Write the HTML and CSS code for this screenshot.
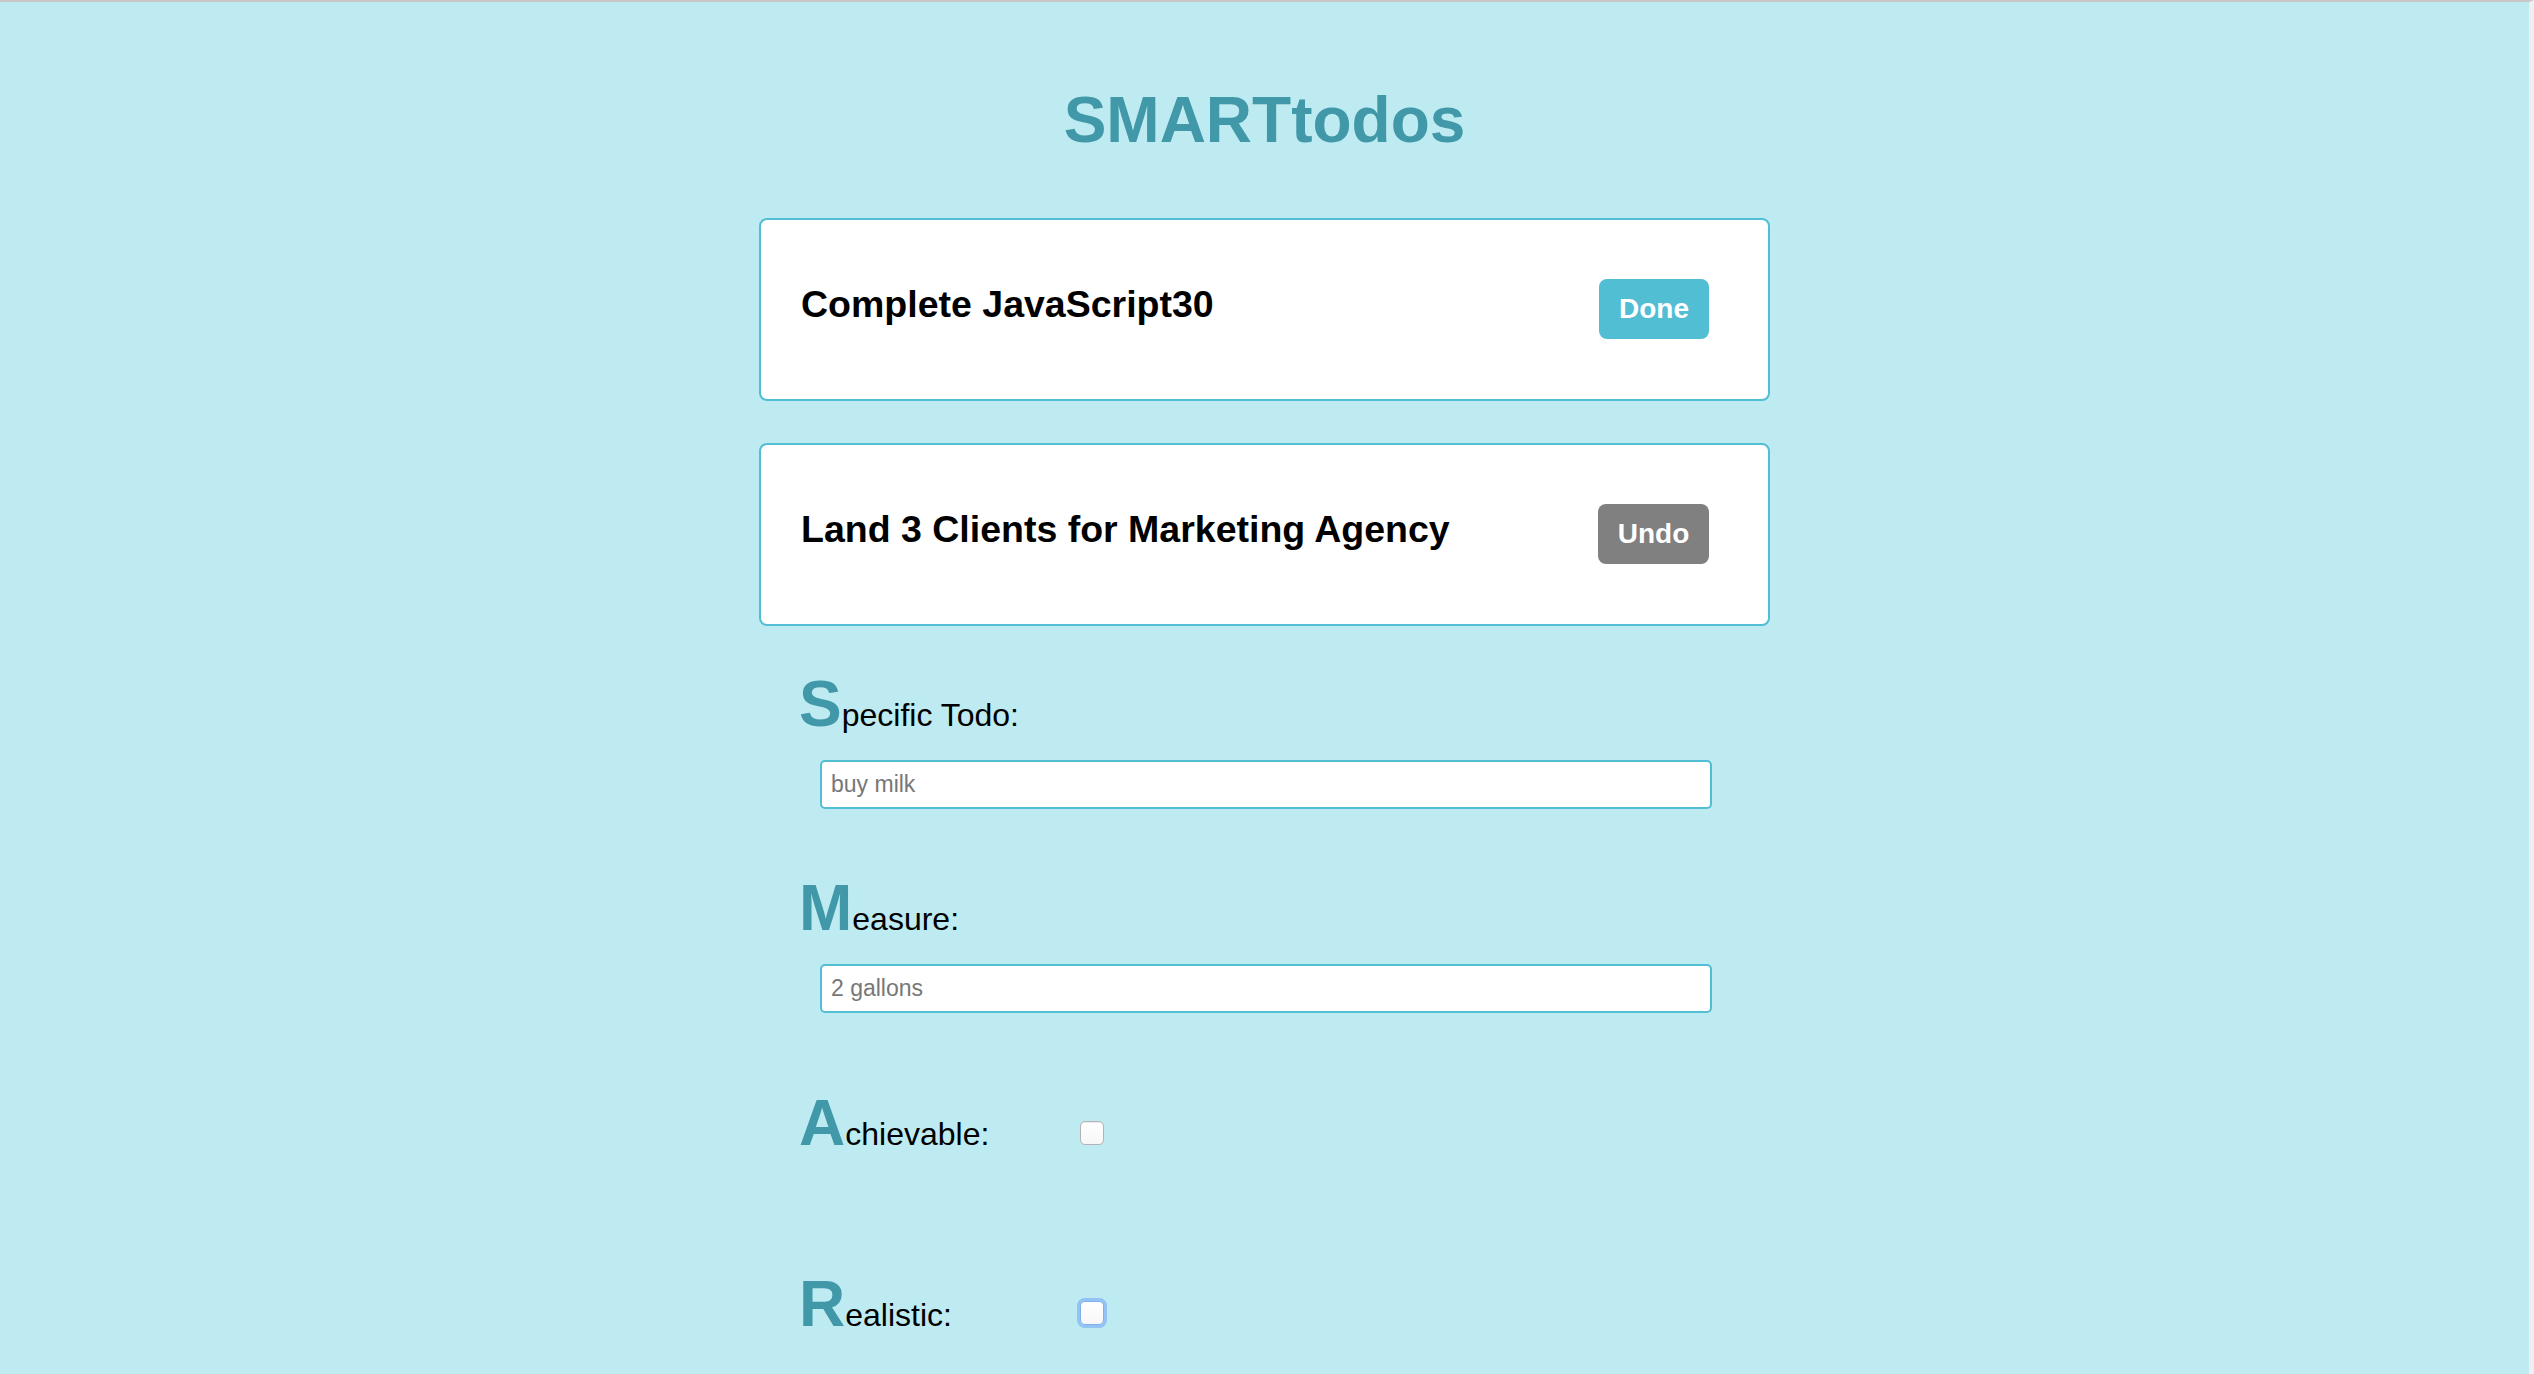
FILE: index.html
```html
<!DOCTYPE html>
<html lang="en">
<head>
<meta charset="utf-8">
<title>SMARTtodos</title>
<link rel="stylesheet" href="styles.css">
</head>
<body>
<main class="app">
  <h1 class="app-title">SMARTtodos</h1>
  <ul class="todo-list">
    <li class="todo-card">
      <h2 class="todo-text">Complete JavaScript30</h2>
      <button class="btn btn-done" type="button">Done</button>
    </li>
    <li class="todo-card">
      <h2 class="todo-text">Land 3 Clients for Marketing Agency</h2>
      <button class="btn btn-undo" type="button">Undo</button>
    </li>
  </ul>
  <form class="smart-form">
    <div class="field field-specific">
      <label class="field-label" for="specific"><span class="initial">S</span>pecific Todo:</label>
      <input class="text-input" id="specific" type="text" placeholder="buy milk">
    </div>
    <div class="field field-measure">
      <label class="field-label" for="measure"><span class="initial">M</span>easure:</label>
      <input class="text-input" id="measure" type="text" placeholder="2 gallons">
    </div>
    <div class="field field-check field-achievable">
      <label class="field-label check-label" for="achievable"><span class="initial">A</span>chievable:</label>
      <input class="check" id="achievable" type="checkbox">
    </div>
    <div class="field field-check field-realistic">
      <label class="field-label check-label" for="realistic"><span class="initial">R</span>ealistic:</label>
      <input class="check check-focused" id="realistic" type="checkbox">
    </div>
  </form>
</main>
</body>
</html>
```

FILE: styles.css
```css
html {
  overflow: hidden;
  background: #bdebf1;
}

body {
  margin: 0;
  min-height: 100vh;
  box-sizing: border-box;
  border-top: 2px solid #c6c6c6;
  border-right: 5px solid #efefef;
  background: #bdebf1;
  font-family: "Liberation Sans", Arial, Helvetica, sans-serif;
  color: #000;
}

.app {
  width: 1011px;
  margin: 0 auto;
}

.app-title {
  margin: 86px 0 0;
  font-size: 64px;
  line-height: 1;
  font-weight: 700;
  text-align: center;
  color: #4098a8;
}

.todo-list {
  list-style: none;
  margin: 66px 0 0;
  padding: 0;
  display: flex;
  flex-direction: column;
  gap: 42px;
}

.todo-card {
  display: flex;
  align-items: center;
  justify-content: space-between;
  background: #fff;
  border: 2px solid #52bed4;
  border-radius: 8px;
  padding: 59px 59px 60px 40px;
}

.todo-text {
  margin: 0 0 9px;
  font-size: 37.5px;
  line-height: 1;
  font-weight: 700;
  color: #000;
}

.btn {
  width: 110px;
  height: 60px;
  padding: 0;
  border: none;
  border-radius: 8px;
  font-family: "Liberation Sans", Arial, Helvetica, sans-serif;
  font-size: 28px;
  font-weight: 700;
  color: #fff;
  flex: none;
}

.btn-done {
  background: #52bed4;
}

.btn-undo {
  width: 111px;
  background: #808080;
}

.smart-form {
  display: flex;
  flex-direction: column;
  padding-left: 40px;
}

.field {
  display: flex;
  flex-direction: column;
  align-items: flex-start;
}

.field-specific {
  margin-top: 46px;
}

.field-measure {
  margin-top: 67px;
}

.field-achievable {
  margin-top: 78px;
}

.field-realistic {
  margin-top: 117px;
}

.field-check {
  flex-direction: row;
}

.field-label {
  font-size: 32px;
  line-height: 32px;
  color: #000;
}

.initial {
  font-size: 64px;
  line-height: 64px;
  font-weight: 700;
  color: #4098a8;
}

.check-label {
  width: 281px;
  flex: none;
}

.text-input {
  box-sizing: border-box;
  width: 892px;
  height: 49px;
  margin: 24px 0 0 21px;
  padding: 0 9px;
  border: 2px solid #52bed4;
  border-radius: 5px;
  background: #fff;
  font-family: "Liberation Sans", Arial, Helvetica, sans-serif;
  font-size: 23px;
  color: #333;
  outline: none;
}

.text-input::placeholder {
  color: #777;
}

.check {
  appearance: none;
  -webkit-appearance: none;
  box-sizing: border-box;
  width: 24px;
  height: 24px;
  margin: 30px 0 0;
  border: 1px solid #b3b3b3;
  border-radius: 5px;
  background: linear-gradient(#ffffff, #f7f7f7);
  box-shadow: inset 0 1px 1px rgba(0, 0, 0, 0.08);
}

.check-focused {
  margin-top: 29px;
  border-color: #7fb0ea;
  box-shadow: 0 0 0 3px #93c2f5;
}
```
